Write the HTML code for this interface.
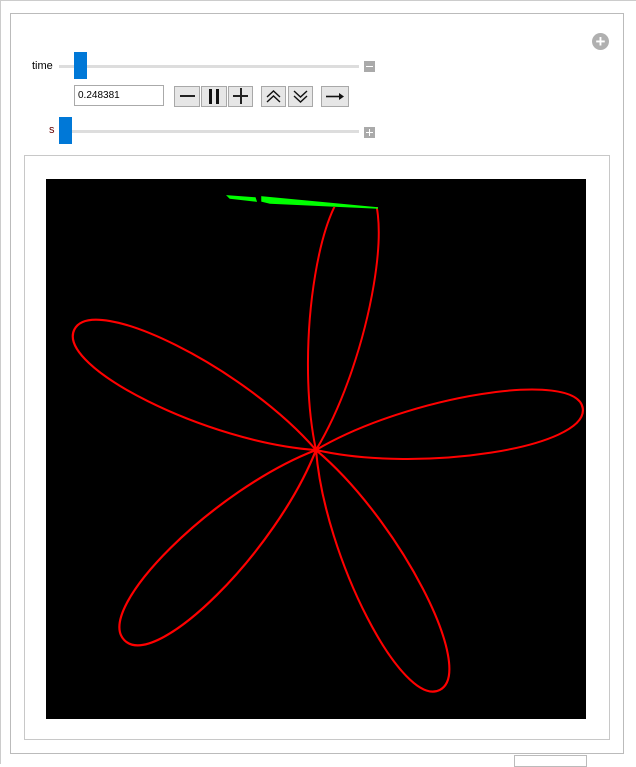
<!DOCTYPE html>
<html><head><style>
body{margin:0;width:636px;height:764px;background:#fff;font-family:"Liberation Sans","DejaVu Sans",sans-serif;position:relative;overflow:hidden}
.a{position:absolute}
.btn{position:absolute;top:86px;height:21px;background:#e6e6e6;border:1px solid #a8a8a8;box-sizing:border-box}
</style></head><body>
<div class="a" style="left:0;top:0;width:636px;height:764px;border-left:1px solid #ccc;border-top:1px solid #ccc;box-sizing:border-box"></div>
<div class="a" style="left:10px;top:13px;width:614px;height:741px;border:1px solid #bbb;box-sizing:border-box"></div>
<div class="a" style="left:514px;top:755px;width:73px;height:12px;border:1px solid #bbb;box-sizing:border-box"></div>
<div class="a" style="left:592px;top:33px;width:17px;height:17px;border-radius:50%;background:#b0b0b0;color:#fff;font-size:17px;line-height:17px;text-align:center;font-weight:bold">+</div>
<div class="a" style="left:32px;top:60px;font-size:11px">time</div>
<div class="a" style="left:59px;top:65px;width:300px;height:3px;background:#ddd"></div>
<div class="a" style="left:74px;top:52px;width:13px;height:27px;background:#0078d7"></div>
<div class="a" style="left:364px;top:61px;width:11px;height:11px;background:#aaa"><div class="a" style="left:2px;top:5px;width:7px;height:1px;background:#fff"></div></div>
<div class="a" style="left:74px;top:85px;width:90px;height:21px;border:1px solid #aaa;box-sizing:border-box;font-size:10px;line-height:19px;padding-left:3px">0.248381</div>
<div class="btn" style="left:174px;width:26px"><div class="a" style="left:5px;top:8px;width:15px;height:2px;background:#222"></div></div>
<div class="btn" style="left:201px;width:26px"><div class="a" style="left:7px;top:2px;width:3px;height:15px;background:#111"></div><div class="a" style="left:14px;top:2px;width:3px;height:15px;background:#111"></div></div>
<div class="btn" style="left:228px;width:25px"><div class="a" style="left:4px;top:8px;width:15px;height:2px;background:#222"></div><div class="a" style="left:11px;top:1px;width:2px;height:16px;background:#222"></div></div>
<div class="btn" style="left:261px;width:25px"><svg class="a" style="left:0;top:0" width="23" height="19"><path d="M5 10 L11.5 4 L18 10 M5 15 L11.5 9 L18 15" fill="none" stroke="#111" stroke-width="1.4"/></svg></div>
<div class="btn" style="left:288px;width:25px"><svg class="a" style="left:0;top:0" width="23" height="19"><path d="M5 4 L11.5 10 L18 4 M5 9 L11.5 15 L18 9" fill="none" stroke="#111" stroke-width="1.4"/></svg></div>
<div class="btn" style="left:321px;width:28px"><svg class="a" style="left:0;top:0" width="26" height="19"><path d="M4 9.5 H20" stroke="#111" stroke-width="1.6"/><path d="M17 6 L22 9.5 L17 13Z" fill="#111"/></svg></div>
<div class="a" style="left:49px;top:124px;font-size:11px;color:#600">s</div>
<div class="a" style="left:59px;top:130px;width:300px;height:3px;background:#ddd"></div>
<div class="a" style="left:59px;top:117px;width:13px;height:27px;background:#0078d7"></div>
<div class="a" style="left:364px;top:127px;width:11px;height:11px;background:#aaa"><div class="a" style="left:2px;top:5px;width:7px;height:1px;background:#fff"></div><div class="a" style="left:5px;top:2px;width:1px;height:7px;background:#fff"></div></div>
<div class="a" style="left:24px;top:155px;width:586px;height:585px;border:1px solid #c8c8c8;box-sizing:border-box"></div>
<svg class="a" style="left:46px;top:179px" width="540" height="540" viewBox="46 179 540 540">
<defs><clipPath id="c"><rect x="46" y="207" width="540" height="520"/></clipPath>
<path id="p" d="M0 0 C100 -44 270 -44 270 0 C270 44 100 44 0 0Z"/></defs>
<rect x="46" y="179" width="540" height="540" fill="#000"/>
<g fill="none" stroke="#f00" stroke-width="2.2" clip-path="url(#c)">
<use href="#p" transform="translate(316 450) rotate(206.5) scale(1,0.95)"/>
<use href="#p" transform="translate(316 450) rotate(-8.9) scale(1,0.9)"/>
<use href="#p" transform="translate(316 450) rotate(135.2) scale(1,1)"/>
<use href="#p" transform="translate(316 450) rotate(62.7) scale(1,0.95)"/>
<use href="#p" transform="translate(316 450) rotate(-80.5) scale(1,0.9)"/>
</g>
<path d="M228 196 L255 198 L256 201 L230 198Z M262 197 L378 208 L270 203 L262 201Z" fill="#0f0" stroke="#0f0" stroke-width="1.5"/>
</svg>
</body></html>
